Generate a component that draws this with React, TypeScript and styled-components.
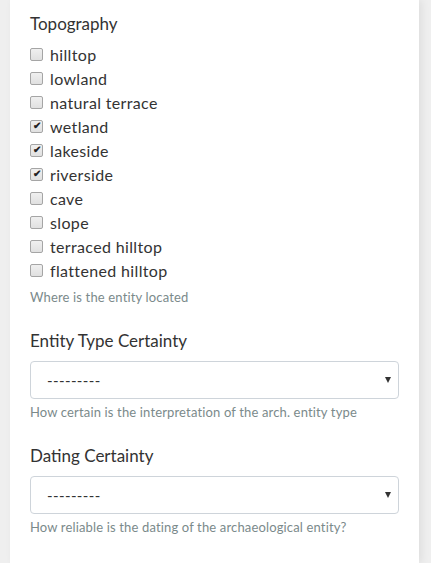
import React from "react";
import styled, { createGlobalStyle } from "styled-components";

const Global = createGlobalStyle`
  html, body {
    margin: 0;
    padding: 0;
    background: #efefef;
    font-family: Lato, "Open Sans", sans-serif;
  }
  * { box-sizing: border-box; }
`;

const Page = styled.div`
  display: flex;
  padding: 0 12px 0 10px;
  min-height: 563px;
`;

const Panel = styled.div`
  flex: 1;
  background: #fff;
  padding: 12px 20px 20px 20px;
  box-shadow: 3px 0 8px rgba(0, 0, 0, 0.07);
  min-height: 563px;
`;

const Group = styled.div<{ $first?: boolean }>`
  margin-top: ${(p) => (p.$first ? "0" : "22px")};
`;

const Label = styled.div`
  font-size: 17px;
  line-height: 24px;
  color: #333;
  margin-bottom: 6px;
`;

const SelectLabel = styled(Label)`
  margin-bottom: 8px;
`;

const CheckList = styled.div`
  display: flex;
  flex-direction: column;
`;

const CheckRow = styled.label`
  display: flex;
  align-items: center;
  gap: 7px;
  height: 24px;
  font-size: 16px;
  letter-spacing: 0.35px;
  color: #333;
`;

const Box = styled.input`
  appearance: none;
  -webkit-appearance: none;
  position: relative;
  margin: 0;
  width: 13px;
  height: 13px;
  border: 1px solid #a5a5a5;
  border-radius: 2px;
  background: linear-gradient(#f0f0f0, #e0e0e0);
  &:checked::after {
    content: "✔";
    position: absolute;
    left: 1.5px;
    top: -1.5px;
    font-size: 10px;
    line-height: 14px;
    font-weight: bold;
    color: #222;
  }
`;

const Hint = styled.div<{ $tight?: boolean }>`
  font-size: 13px;
  line-height: 20px;
  letter-spacing: 0.15px;
  color: #7b8a8b;
  margin-top: ${(p) => (p.$tight ? "3px" : "5px")};
`;

const SelectWrap = styled.div`
  position: relative;
`;

const Select = styled.select`
  appearance: none;
  -webkit-appearance: none;
  width: 100%;
  height: 38px;
  border: 1px solid #ced4da;
  border-radius: 4px;
  background: #fff;
  padding: 0 12px 0 16px;
  font-family: Lato, "Open Sans", sans-serif;
  font-size: 15px;
  letter-spacing: 0.4px;
  color: #333;
  outline: none;
`;

const Arrow = styled.span`
  position: absolute;
  right: 8px;
  top: 50%;
  transform: translateY(-50%);
  width: 0;
  height: 0;
  border-left: 3.5px solid transparent;
  border-right: 3.5px solid transparent;
  border-top: 6px solid #333;
  pointer-events: none;
`;

const items: { name: string; checked: boolean }[] = [
  { name: "hilltop", checked: false },
  { name: "lowland", checked: false },
  { name: "natural terrace", checked: false },
  { name: "wetland", checked: true },
  { name: "lakeside", checked: true },
  { name: "riverside", checked: true },
  { name: "cave", checked: false },
  { name: "slope", checked: false },
  { name: "terraced hilltop", checked: false },
  { name: "flattened hilltop", checked: false },
];

const SelectField: React.FC<{ label: string; hint: string }> = ({ label, hint }) => (
  <Group>
    <SelectLabel>{label}</SelectLabel>
    <SelectWrap>
      <Select defaultValue="">
        <option value="">---------</option>
      </Select>
      <Arrow />
    </SelectWrap>
    <Hint $tight>{hint}</Hint>
  </Group>
);

export default function App() {
  return (
    <Page>
      <Global />
      <Panel>
        <Group $first>
          <Label>Topography</Label>
          <CheckList>
            {items.map((it) => (
              <CheckRow key={it.name}>
                <Box type="checkbox" defaultChecked={it.checked} />
                {it.name}
              </CheckRow>
            ))}
          </CheckList>
          <Hint>Where is the entity located</Hint>
        </Group>
        <SelectField
          label="Entity Type Certainty"
          hint="How certain is the interpretation of the arch. entity type"
        />
        <SelectField
          label="Dating Certainty"
          hint="How reliable is the dating of the archaeological entity?"
        />
      </Panel>
    </Page>
  );
}
